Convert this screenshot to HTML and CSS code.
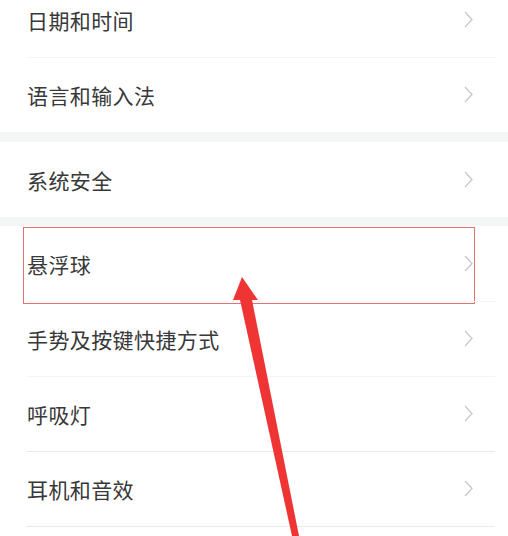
FILE: index.html
```html
<!DOCTYPE html>
<html lang="zh-CN">
<head>
  <meta charset="UTF-8" />
  <meta name="viewport" content="width=device-width, initial-scale=1.0"/>
  <title>设置</title>
  <link rel="stylesheet" href="styles.css">
</head>
<body>

<div class="screen">
  <div class="group group-first">
    <div class="row">
      <span class="label">日期和时间</span>
      <svg class="chev" width="9" height="17" viewBox="0 0 9 17"><path d="M1 1 L8 8.5 L1 16" /></svg>
    </div>
    <div class="row faint">
      <span class="label">语言和输入法</span>
      <svg class="chev" width="9" height="17" viewBox="0 0 9 17"><path d="M1 1 L8 8.5 L1 16" /></svg>
    </div>
  </div>

  <div class="gap"></div>

  <div class="group">
    <div class="row">
      <span class="label">系统安全</span>
      <svg class="chev" width="9" height="17" viewBox="0 0 9 17"><path d="M1 1 L8 8.5 L1 16" /></svg>
    </div>
  </div>

  <div class="gap gap-small"></div>

  <div class="group">
    <div class="row row-marked">
      <span class="label">悬浮球</span>
      <svg class="chev" width="9" height="17" viewBox="0 0 9 17"><path d="M1 1 L8 8.5 L1 16" /></svg>
      <div class="highlight"></div>
    </div>
    <div class="row faint">
      <span class="label">手势及按键快捷方式</span>
      <svg class="chev" width="9" height="17" viewBox="0 0 9 17"><path d="M1 1 L8 8.5 L1 16" /></svg>
    </div>
    <div class="row faint">
      <span class="label">呼吸灯</span>
      <svg class="chev" width="9" height="17" viewBox="0 0 9 17"><path d="M1 1 L8 8.5 L1 16" /></svg>
    </div>
    <div class="row">
      <span class="label">耳机和音效</span>
      <svg class="chev" width="9" height="17" viewBox="0 0 9 17"><path d="M1 1 L8 8.5 L1 16" /></svg>
    </div>
    <div class="row">
      <span class="label"></span>
    </div>
  </div>

  <!-- arrow pointing at the floating ball item -->
  <svg class="arrow" width="508" height="536" viewBox="0 0 508 536">
    <polygon points="242,277 258,300 252,300 299,536 292,536 240,300 233,300" fill="#ef3434" />
  </svg>
</div>

</body>
</html>
```

FILE: styles.css
```css
html, body {
  margin: 0;
  padding: 0;
  background: #ffffff;
}
body {
  font-family: "Noto Sans CJK SC", "Noto Sans", sans-serif;
  overflow: hidden;
}
.screen {
  position: relative;
  width: 508px;
  height: 536px;
  overflow: hidden;
}
.group {
  background: #ffffff;
}
.group-first {
  margin-top: -18px;
}
.gap {
  height: 10px;
  background: #f4f5f5;
}
.gap-small {
  height: 9px;
}
.row {
  position: relative;
  height: 75px;
  display: flex;
  align-items: center;
  justify-content: space-between;
  padding: 0 35px 0 27px;
}
.row + .row::before {
  content: '';
  position: absolute;
  top: 0;
  left: 27px;
  right: 13px;
  height: 1px;
  background: #e9e9e9;
}
.row.faint::before {
  background: #f4f4f4;
}
.label {
  font-size: 21px;
  color: #383838;
  letter-spacing: 0.4px;
}
.chev path {
  fill: none;
  stroke: #c8c8c8;
  stroke-width: 1.3;
}
.highlight {
  position: absolute;
  top: 1px;
  left: 23px;
  width: 450px;
  height: 75px;
  border: 1.5px solid #e07272;
}
.arrow {
  position: absolute;
  top: 0;
  left: 0;
}
```
